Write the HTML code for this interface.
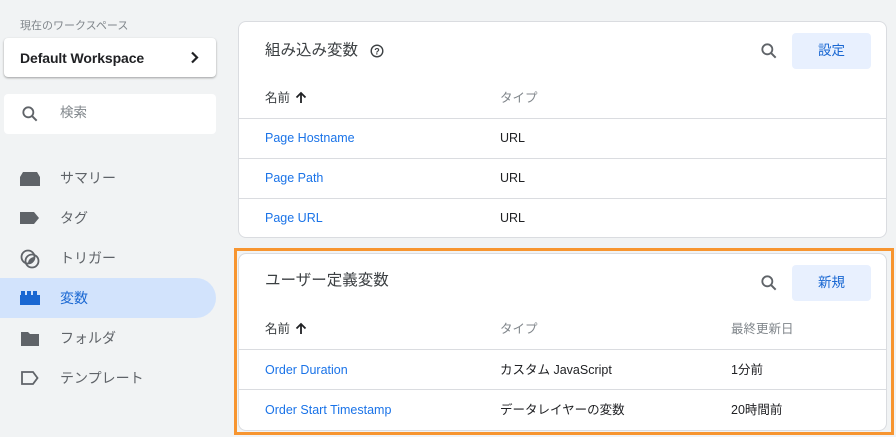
<!DOCTYPE html><html><head><meta charset="utf-8"><style>
*{box-sizing:border-box;margin:0;padding:0}
body{width:896px;height:437px;background:#f1f3f4;font-family:"Liberation Sans","Noto Sans CJK JP",sans-serif;position:relative;overflow:hidden;color:#202124}
.a{position:absolute}
.card{position:absolute;background:#fff;border:1px solid #dadce0;border-radius:8px;overflow:hidden}
.t{position:absolute;font-size:12.5px;white-space:nowrap;line-height:16px;height:16px}
.link{color:#1a73e8}
.line{position:absolute;left:0;right:0;height:1px;background:#dadce0}
.btn{position:absolute;background:#e8f0fe;color:#1967d2;border-radius:4px;width:79px;height:36px;font-size:13.5px;text-align:center;line-height:36px}
.nav{position:absolute;left:60px;font-size:14px;color:#5f6368;line-height:18px}
.arr{position:absolute;top:1px}
</style></head><body>
<div class="t" style="left:20px;top:18px;font-size:11px;color:#80868b">現在のワークスペース</div>
<div class="a" style="left:4px;top:38px;width:212px;height:39px;background:#fff;border-radius:4px;box-shadow:0 1px 2px rgba(0,0,0,.35)">
<div class="t" style="left:16px;top:12px;font-size:14px;font-weight:bold;color:#202124;letter-spacing:-0.1px">Default Workspace</div>
<svg class="a" style="left:186px;top:13px" width="10" height="13" viewBox="0 0 10 13"><path d="M2 1.5l5 5-5 5" stroke="#202124" stroke-width="2.2" fill="none"/></svg></div>
<div class="a" style="left:4px;top:94px;width:212px;height:40px;background:#fff;border-radius:4px">
<svg class="a" style="left:16px;top:10px" width="20" height="20" viewBox="0 0 24 24"><circle cx="10" cy="10" r="6" stroke="#5f6368" stroke-width="2.2" fill="none"/><path d="M14.5 14.5l5.5 5.5" stroke="#5f6368" stroke-width="2.4"/></svg>
<div class="t" style="left:56px;top:11px;font-size:13.5px;color:#80868b">検索</div></div>
<svg class="a" style="left:20px;top:171px" width="20" height="16"><path d="M3 1h14l3 5v9H0V6z" fill="#5f6368"/></svg>
<div class="nav" style="top:169px">サマリー</div>
<svg class="a" style="left:20px;top:211px" width="20" height="14"><path d="M0 1h14l5 6-5 6H0z" fill="#5f6368"/></svg>
<div class="nav" style="top:209px">タグ</div>
<svg class="a" style="left:20px;top:249px" width="20" height="20"><circle cx="8" cy="8" r="6.5" fill="none" stroke="#5f6368" stroke-width="1.8"/><circle cx="12" cy="12" r="6.5" fill="none" stroke="#5f6368" stroke-width="1.8"/><path d="M8 14.5A6.5 6.5 0 0 1 14.5 8 6.5 6.5 0 0 1 8 14.5z" fill="#5f6368"/></svg>
<div class="nav" style="top:249px">トリガー</div>
<div class="a" style="left:0;top:278px;width:216px;height:40px;background:#d2e3fc;border-radius:0 20px 20px 0"></div>
<svg class="a" style="left:20px;top:291px" width="20" height="14"><path d="M0 4h1V0h4v4h2V0h4v4h2V0h4v4h3v10H0z" fill="#1967d2"/></svg>
<div class="nav" style="top:289px;color:#1967d2">変数</div>
<svg class="a" style="left:21px;top:331px" width="18" height="15"><path d="M0 1h7l2 2h9v12H0z" fill="#5f6368"/></svg>
<div class="nav" style="top:329px">フォルダ</div>
<svg class="a" style="left:21px;top:371px" width="18" height="14"><path d="M1 1h11l4.5 6-4.5 6H1z" fill="none" stroke="#5f6368" stroke-width="1.8"/></svg>
<div class="nav" style="top:369px">テンプレート</div>

<div class="card" style="left:238px;top:21px;width:649px;height:217px">
<div class="t" style="left:26px;top:19px;font-size:15.5px;color:#3c4043;line-height:20px;height:20px">組み込み変数</div>
<svg class="a" style="left:131px;top:22px" width="14" height="14" viewBox="0 0 14 14"><circle cx="7" cy="7" r="5.8" fill="none" stroke="#3c4043" stroke-width="1.4"/><text x="7" y="10.5" font-size="9" text-anchor="middle" fill="#3c4043" font-family="Liberation Sans" font-weight="bold">?</text></svg>
<svg class="a" style="left:520px;top:19px" width="20" height="20" viewBox="0 0 24 24"><circle cx="10" cy="10" r="6" stroke="#5f6368" stroke-width="2.2" fill="none"/><path d="M14.5 14.5l5.5 5.5" stroke="#5f6368" stroke-width="2.4"/></svg>
<div class="btn" style="left:553px;top:11px">設定</div>
<div class="t" style="left:26px;top:68px;color:#3c4043">名前</div>
<svg class="a" style="left:56px;top:69px" width="12" height="13" viewBox="0 0 12 13"><path d="M6 12V2M1.5 6.5L6 2l4.5 4.5" stroke="#202124" stroke-width="1.8" fill="none"/></svg>
<div class="t" style="left:261px;top:68px;color:#80868b">タイプ</div>
<div class="line" style="top:96px"></div>
<div class="t link" style="left:26px;top:108px">Page Hostname</div><div class="t" style="left:261px;top:108px">URL</div>
<div class="line" style="top:136px"></div>
<div class="t link" style="left:26px;top:148px">Page Path</div><div class="t" style="left:261px;top:148px">URL</div>
<div class="line" style="top:176px"></div>
<div class="t link" style="left:26px;top:188px">Page URL</div><div class="t" style="left:261px;top:188px">URL</div>
</div>

<div class="a" style="left:234px;top:248px;width:660px;height:187px;border:3px solid #f79530"></div>
<div class="card" style="left:238px;top:253px;width:649px;height:178px">
<div class="t" style="left:26px;top:17px;font-size:15.5px;color:#3c4043;line-height:20px;height:20px">ユーザー定義変数</div>
<svg class="a" style="left:520px;top:19px" width="20" height="20" viewBox="0 0 24 24"><circle cx="10" cy="10" r="6" stroke="#5f6368" stroke-width="2.2" fill="none"/><path d="M14.5 14.5l5.5 5.5" stroke="#5f6368" stroke-width="2.4"/></svg>
<div class="btn" style="left:553px;top:11px">新規</div>
<div class="t" style="left:26px;top:67px;color:#3c4043">名前</div>
<svg class="a" style="left:56px;top:68px" width="12" height="13" viewBox="0 0 12 13"><path d="M6 12V2M1.5 6.5L6 2l4.5 4.5" stroke="#202124" stroke-width="1.8" fill="none"/></svg>
<div class="t" style="left:261px;top:67px;color:#80868b">タイプ</div>
<div class="t" style="left:492px;top:67px;color:#80868b">最終更新日</div>
<div class="line" style="top:95px"></div>
<div class="t link" style="left:26px;top:108px">Order Duration</div><div class="t" style="left:261px;top:108px">カスタム JavaScript</div><div class="t" style="left:492px;top:108px">1分前</div>
<div class="line" style="top:135px"></div>
<div class="t link" style="left:26px;top:148px">Order Start Timestamp</div><div class="t" style="left:261px;top:148px">データレイヤーの変数</div><div class="t" style="left:492px;top:148px">20時間前</div>
</div>
</body></html>
